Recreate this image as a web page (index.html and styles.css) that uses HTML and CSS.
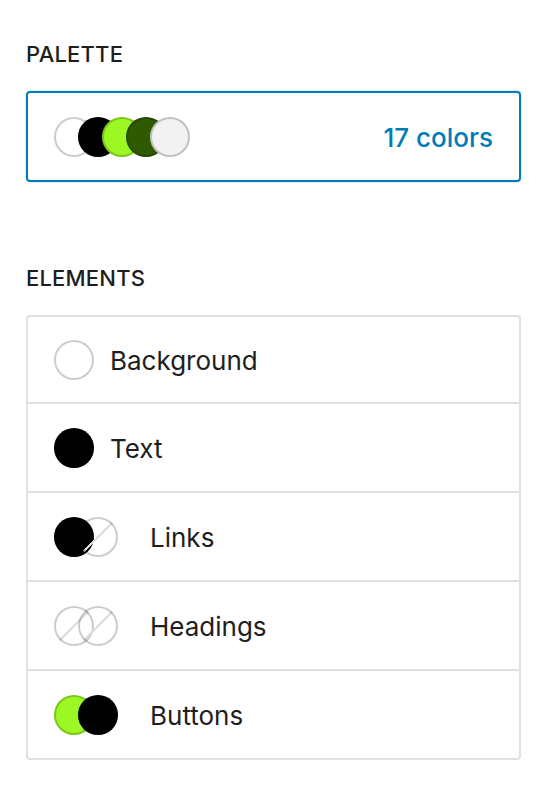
FILE: index.html
```html
<!DOCTYPE html>
<html>
<head>
<meta charset="utf-8">
<link rel="stylesheet" href="styles.css">
</head>
<body>
<div class="panel">
  <h2 class="label">Palette</h2>
  <div class="palette-box">
    <div class="stack">
      <span class="dot c-white"></span>
      <span class="dot c-black"></span>
      <span class="dot c-lime"></span>
      <span class="dot c-dark"></span>
      <span class="dot c-light"></span>
    </div>
    <span class="count">17 colors</span>
  </div>

  <h2 class="label label-elements">Elements</h2>
  <div class="elements">
    <div class="row">
      <div class="stack one"><span class="dot c-white"></span></div>
      <span class="name">Background</span>
    </div>
    <div class="row">
      <div class="stack one"><span class="dot c-black"></span></div>
      <span class="name">Text</span>
    </div>
    <div class="row">
      <div class="stack two"><span class="dot c-black"></span><span class="dot c-none"></span></div>
      <span class="name">Links</span>
    </div>
    <div class="row">
      <div class="stack two"><span class="dot c-none"></span><span class="dot c-none"></span></div>
      <span class="name">Headings</span>
    </div>
    <div class="row">
      <div class="stack two"><span class="dot c-lime"></span><span class="dot c-black"></span></div>
      <span class="name">Buttons</span>
    </div>
  </div>
</div>
</body>
</html>
```

FILE: styles.css
```css
html, body {
  margin: 0;
  padding: 0;
  background: #ffffff;
}

body {
  font-family: Inter, "Liberation Sans", sans-serif;
  color: #1e1e1e;
}

.panel {
  padding: 43px 27px 0 26px;
}

.label {
  margin: 0 0 26px 0;
  font-size: 22px;
  line-height: 22px;
  font-weight: 500;
  text-transform: uppercase;
  color: #1e1e1e;
  letter-spacing: 0.2px;
}

.label-elements {
  margin-top: 85px;
}

.palette-box {
  height: 87px;
  border: 2px solid #007cba;
  border-radius: 4px;
  box-shadow: 0 0 0 1px rgba(0, 124, 186, 0.12);
  display: flex;
  align-items: center;
  justify-content: space-between;
  padding: 0 26px 0 26px;
}

.count {
  font-size: 26px;
  line-height: 26px;
  font-weight: 500;
  color: #007cba;
  padding-top: 2px;
}

.stack {
  display: flex;
  align-items: center;
}

.stack .dot + .dot {
  margin-left: -16px;
}

.stack.one {
  width: 40px;
  margin-right: 16px;
}

.stack.two {
  width: 80px;
  margin-right: 16px;
}

.dot {
  display: block;
  width: 40px;
  height: 40px;
  border-radius: 50%;
  box-shadow: inset 0 0 0 2px rgba(0, 0, 0, 0.2);
  flex: none;
  position: relative;
}

.c-white { background: #ffffff; }
.c-black { background: #000000; }
.c-lime { background: #9cf722; }
.c-dark { background: #2f5a00; }
.c-light { background: #f2f2f2; }
.c-none {
  background: linear-gradient(-45deg, transparent 48%, #dddddd 48%, #dddddd 52%, transparent 52%);
}

.elements {
  border: 2px solid #e0e0e0;
  border-radius: 4px;
}

.row {
  height: 87px;
  display: flex;
  align-items: center;
  padding-left: 26px;
  border-bottom: 2px solid #e0e0e0;
}

.row:first-child {
  height: 85px;
}

.row:last-child {
  border-bottom: none;
}

.name {
  font-size: 26px;
  line-height: 26px;
  padding-top: 3px;
}
```
